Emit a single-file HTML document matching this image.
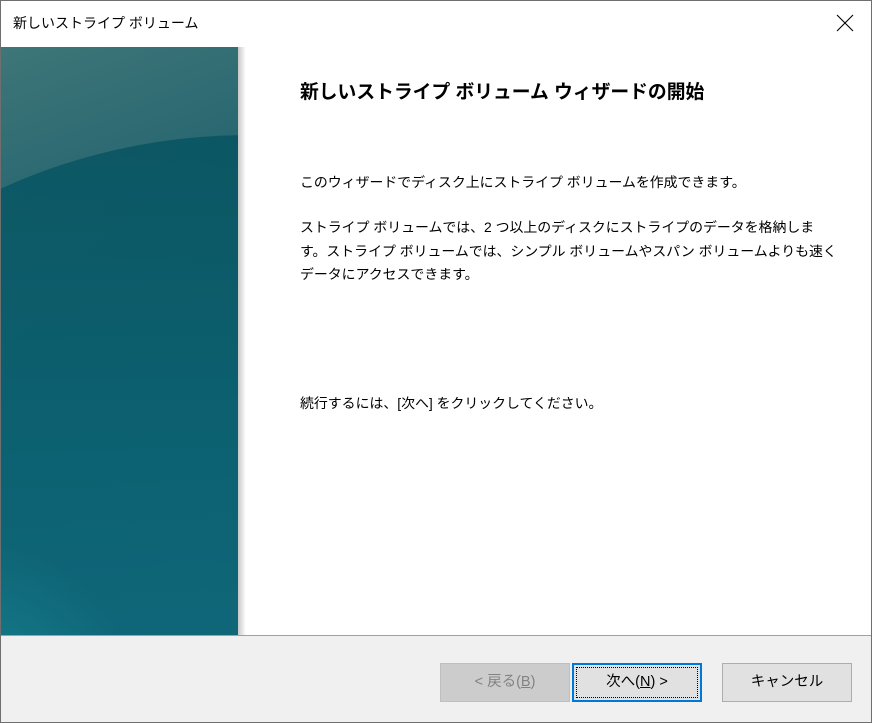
<!DOCTYPE html>
<html><head><meta charset="utf-8"><style>
*{margin:0;padding:0;box-sizing:border-box}
html,body{width:872px;height:723px;overflow:hidden}
body{background:#fff;font-family:"Liberation Sans","Noto Sans CJK JP",sans-serif;position:relative}
.win{position:absolute;left:0;top:0;width:872px;height:723px;border:1px solid #6f6f6f}
.title{position:absolute;left:13px;top:13px;font-size:14px;color:#000}
.close{position:absolute;left:836px;top:14px}
.panel{position:absolute;left:1px;top:47px;width:237px;height:588px;overflow:hidden;
background:linear-gradient(160deg,#3e7678 0%,#266570 30%,#0f6476 60%,#157084 100%)}
.panel .arc{position:absolute;left:-250px;top:88px;width:1000px;height:800px;border-radius:50%;background:linear-gradient(180deg,#0a5562 0%,#0c6171 40%,#126e82 100%);opacity:.92}
.panel .glow{position:absolute;left:-80px;top:470px;width:200px;height:200px;background:radial-gradient(circle at 20% 100%,rgba(30,150,160,.6),transparent 70%)}
.shadow{position:absolute;left:238px;top:47px;width:8px;height:588px;background:linear-gradient(90deg,#c8c8c8,#fff)}
.h{position:absolute;left:300px;top:77px;font-size:18.8px;font-weight:bold;color:#000;white-space:nowrap}
.t{position:absolute;left:300px;font-size:13.9px;color:#000;line-height:23.5px;white-space:nowrap}
.bottom{position:absolute;left:1px;top:635px;width:870px;height:87px;background:#f0f0f0;border-top:1px solid #a0a0a0}
.btn{position:absolute;top:663px;width:130px;height:39px;border:1px solid #adadad;background:#e1e1e1;font-size:14.5px;text-align:center;line-height:37px;color:#000;overflow:hidden}
</style></head><body>
<div class="win"></div>
<div class="title">新しいストライプ ボリューム</div>
<svg class="close" width="18" height="18" viewBox="0 0 18 18"><path d="M1 1L17 17M17 1L1 17" stroke="#000" stroke-width="1.1"/></svg>
<div class="panel"><div class="arc"></div><div class="glow"></div></div>
<div class="shadow"></div>
<div class="h">新しいストライプ ボリューム ウィザードの開始</div>
<div class="t" style="top:171px">このウィザードでディスク上にストライプ ボリュームを作成できます。</div>
<div class="t" style="top:216px">ストライプ ボリュームでは、2 つ以上のディスクにストライプのデータを格納しま<br>す。ストライプ ボリュームでは、シンプル ボリュームやスパン ボリュームよりも速く<br>データにアクセスできます。</div>
<div class="t" style="top:392px">続行するには、[次へ] をクリックしてください。</div>
<div class="bottom"></div>
<div class="btn" style="left:440px;background:#cccccc;border-color:#bfbfbf;color:#838383">&lt; 戻る(<u>B</u>)</div>
<div class="btn" style="left:572px;border:2px solid #0078d7;line-height:35px"><span style="position:absolute;left:2px;top:2px;right:2px;bottom:2px;border:1px dotted #000"></span>次へ(<u>N</u>) &gt;</div>
<div class="btn" style="left:722px">キャンセル</div>
</body></html>
